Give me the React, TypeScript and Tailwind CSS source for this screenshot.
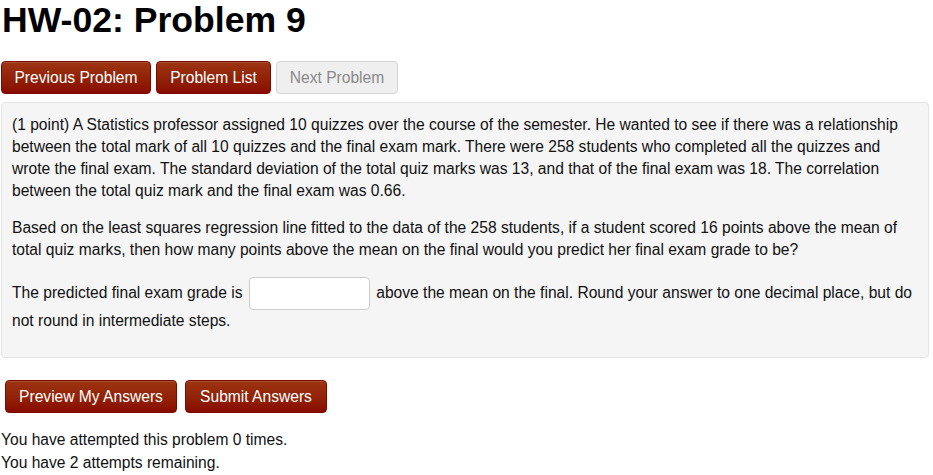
const btn =
  'h-[33px] rounded-[4px] border border-[#7a0a00] bg-gradient-to-b from-[#9c3411] to-[#880a00] text-white text-[15.6px] leading-none whitespace-nowrap shadow-[inset_0_1px_0_rgba(255,255,255,0.15)]'

export default function App() {
  return (
    <div className="w-[933px] h-[475px] overflow-hidden bg-white text-[#111] font-['Liberation_Sans',Arial,sans-serif]">
      <h1 className="pl-[2px] pt-[1px] text-[35.6px] leading-[38px] font-bold text-black">HW-02: Problem 9</h1>

      <div className="flex gap-[5px] mt-[22px] pl-[1px]">
        <button className={`${btn} w-[150px]`}>Previous Problem</button>
        <button className={`${btn} w-[115px]`}>Problem List</button>
        <button className="h-[33px] w-[122px] rounded-[4px] border border-[#d4d4d4] bg-[#efefef] text-[#8a8a8a] text-[15.6px] leading-none whitespace-nowrap">
          Next Problem
        </button>
      </div>

      <div className="ml-[1px] mt-[8px] w-[928px] rounded-[4px] border border-[#e3e3e3] bg-[#f5f5f5] px-[10px] pt-[11px] pb-[10px] text-[15.6px] leading-[22px]">
        <p className="mb-[15px]">
          (1 point) A Statistics professor assigned 10 quizzes over the course of the semester. He wanted to see if there was a relationship
          between the total mark of all 10 quizzes and the final exam mark. There were 258 students who completed all the quizzes and
          wrote the final exam. The standard deviation of the total quiz marks was 13, and that of the final exam was 18. The correlation
          between the total quiz mark and the final exam was 0.66.
        </p>
        <p className="mb-[15px]">
          Based on the least squares regression line fitted to the data of the 258 students, if a student scored 16 points above the mean of
          total quiz marks, then how many points above the mean on the final would you predict her final exam grade to be?
        </p>
        <p className="mb-[12px] pt-[3px] leading-[28px]">
          The predicted final exam grade is{' '}
          <input
            type="text"
            className="inline-block align-middle w-[121px] h-[33px] -my-[3px] mx-[2px] rounded-[4px] border border-[#cccccc] bg-white"
          />{' '}
          above the mean on the final. Round your answer to one decimal place, but do not round in intermediate steps.
        </p>
      </div>

      <div className="flex gap-[8px] mt-[22px] pl-[5px]">
        <button className={`${btn} w-[172px]`}>Preview My Answers</button>
        <button className={`${btn} w-[142px]`}>Submit Answers</button>
      </div>

      <div className="mt-[15px] pl-[1px] text-[15.6px] leading-[23px]">
        <div>You have attempted this problem 0 times.</div>
        <div>You have 2 attempts remaining.</div>
      </div>
    </div>
  )
}
